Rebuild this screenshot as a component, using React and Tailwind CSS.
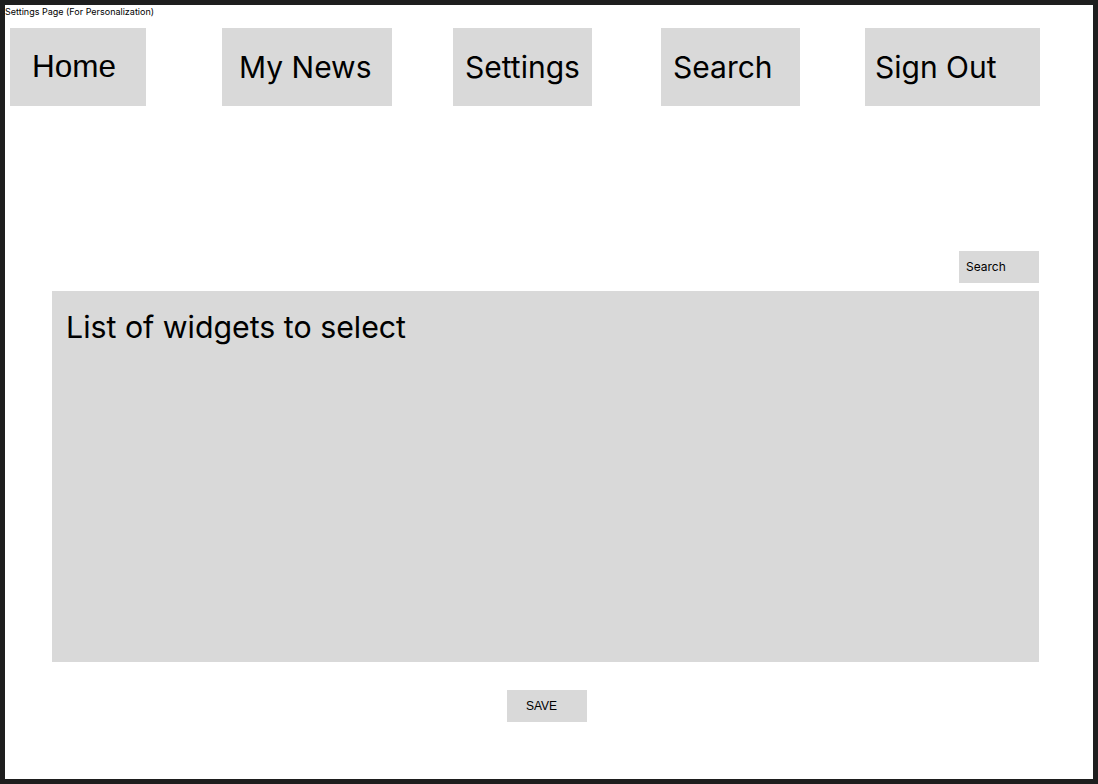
const inter = "font-['Inter',sans-serif]";
const arial = "font-['Liberation_Sans',Arial,sans-serif]";

const navItems = [
  { label: "Home", box: "ml-[5px] w-[136px] pl-[22px] text-[31.5px]", font: arial },
  { label: "My News", box: "ml-[76px] w-[170px] pl-[17px] text-[30px]", font: inter },
  { label: "Settings", box: "ml-[61px] w-[139px] pl-[12px] text-[30px]", font: inter },
  { label: "Search", box: "ml-[69px] w-[139px] pl-[12px] text-[30px]", font: inter },
  { label: "Sign Out", box: "ml-[65px] w-[175px] pl-[10px] text-[30px]", font: inter },
];

export default function App() {
  return (
    <div className="min-h-screen bg-[#1e1e1e] p-[5px]">
      <div className="h-[774px] w-[1088px] bg-white text-black">
        <p className={`${inter} h-[13px] text-[9px] leading-[13px]`}>
          Settings Page (For Personalization)
        </p>

        <nav className="mt-[10px] flex">
          {navItems.map((item) => (
            <a
              key={item.label}
              href="#"
              className={`${item.box} ${item.font} flex h-[78px] items-center bg-[#d9d9d9] leading-none`}
            >
              {item.label}
            </a>
          ))}
        </nav>

        <div className="mt-[145px] ml-[47px] mr-[54px]">
          <div className="flex justify-end">
            <div
              className={`${inter} flex h-[32px] w-[80px] items-center bg-[#d9d9d9] pl-[7px] text-[12px]`}
            >
              Search
            </div>
          </div>

          <div className="mt-[8px] h-[371px] bg-[#d9d9d9] pl-[14px] pt-[17px]">
            <h2 className={`${inter} text-[30.3px] leading-[38px]`}>
              List of widgets to select
            </h2>
          </div>
        </div>

        <button
          type="button"
          className={`${arial} mt-[28px] ml-[502px] flex h-[32px] w-[80px] items-center bg-[#d9d9d9] pl-[19px] text-[12px]`}
        >
          SAVE
        </button>
      </div>
    </div>
  );
}
